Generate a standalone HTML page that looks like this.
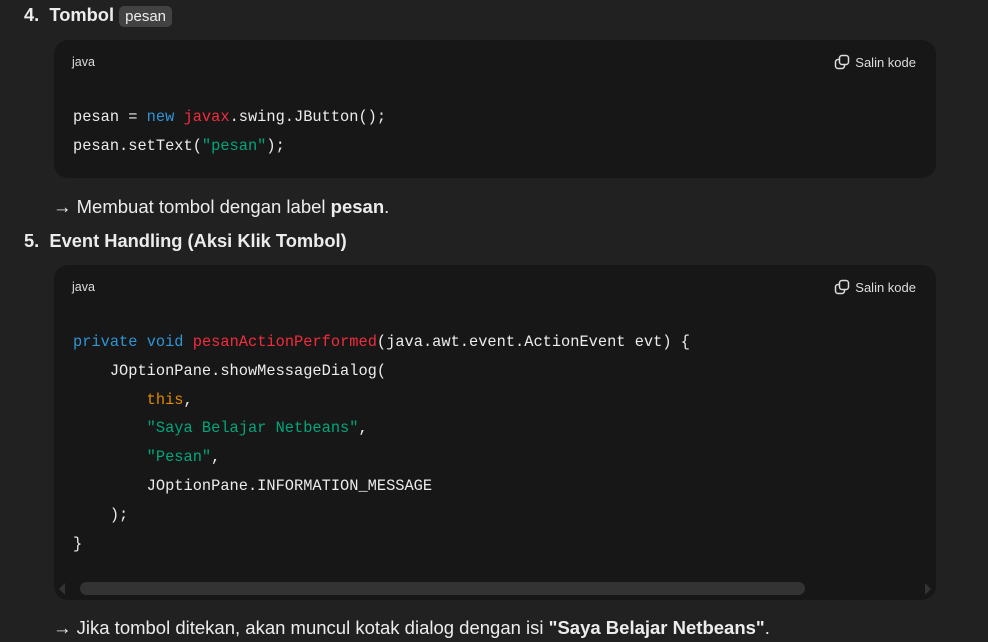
<!DOCTYPE html>
<html><head><style>
body{margin:0;background:#212121;width:988px;height:642px;overflow:hidden;font-family:"Liberation Sans",sans-serif;color:#ececec;position:relative}
.a{position:absolute;white-space:pre}
.code{position:absolute;left:54px;width:882px;background:#171717;border-radius:14px}
.lang{position:absolute;left:18px;font-size:12.5px;color:#ddd}
.copy{position:absolute;right:20px;font-size:13px;color:#ddd}
.copy svg{vertical-align:-3px;margin-right:5px}
.pre{position:absolute;left:19px;font-family:"Liberation Mono",monospace;font-size:15.35px;line-height:28.8px;color:#ececec;white-space:pre}
.k{color:#2e95d3}.r{color:#f22c3d}.s{color:#00a67d}.o{color:#df8a00}
.ic{background:#424242;border-radius:5px;padding:2px 6px;font-weight:normal;font-size:15px}
</style></head><body>
<div class="a" style="left:24px;top:4px;font-size:18.3px;font-weight:bold">4.&nbsp; Tombol <span class="ic">pesan</span></div>
<div class="code" style="top:40px;height:138px">
 <div class="lang" style="top:15px">java</div>
 <div class="copy" style="top:14px"><svg width="16" height="16" viewBox="0 0 16 16" fill="none" stroke="#ddd" stroke-width="1.5"><rect x="5.5" y="1.5" width="9" height="9" rx="2.5"/><path d="M10.5 10.5v1.5a2.5 2.5 0 0 1-2.5 2.5H4a2.5 2.5 0 0 1-2.5-2.5V8A2.5 2.5 0 0 1 4 5.5h1.5"/></svg>Salin kode</div>
 <div class="pre" style="top:63px">pesan = <span class="k">new</span> <span class="r">javax</span>.swing.JButton();
pesan.setText(<span class="s">"pesan"</span>);</div>
</div>
<div class="a" style="left:53px;top:196px;font-size:18.5px">→ Membuat tombol dengan label <b>pesan</b>.</div>
<div class="a" style="left:24px;top:230px;font-size:18.3px;font-weight:bold">5.&nbsp; Event Handling (Aksi Klik Tombol)</div>
<div class="code" style="top:265px;height:335px">
 <div class="lang" style="top:15px">java</div>
 <div class="copy" style="top:14px"><svg width="16" height="16" viewBox="0 0 16 16" fill="none" stroke="#ddd" stroke-width="1.5"><rect x="5.5" y="1.5" width="9" height="9" rx="2.5"/><path d="M10.5 10.5v1.5a2.5 2.5 0 0 1-2.5 2.5H4a2.5 2.5 0 0 1-2.5-2.5V8A2.5 2.5 0 0 1 4 5.5h1.5"/></svg>Salin kode</div>
 <div class="pre" style="top:63px"><span class="k">private</span> <span class="k">void</span> <span class="r">pesanActionPerformed</span>(java.awt.event.ActionEvent evt) {
    JOptionPane.showMessageDialog(
        <span class="o">this</span>,
        <span class="s">"Saya Belajar Netbeans"</span>,
        <span class="s">"Pesan"</span>,
        JOptionPane.INFORMATION_MESSAGE
    );
}</div>
 <div style="position:absolute;left:26px;top:317px;width:725px;height:13px;background:#333;border-radius:7px"></div>
 <div style="position:absolute;left:5px;top:318px;width:0;height:0;border-top:6px solid transparent;border-bottom:6px solid transparent;border-right:6px solid #333"></div>
 <div style="position:absolute;right:5px;top:318px;width:0;height:0;border-top:6px solid transparent;border-bottom:6px solid transparent;border-left:6px solid #333"></div>
</div>
<div class="a" style="left:53px;top:617px;font-size:18.5px">→ Jika tombol ditekan, akan muncul kotak dialog dengan isi <b>"Saya Belajar Netbeans"</b>.</div>
</body></html>
